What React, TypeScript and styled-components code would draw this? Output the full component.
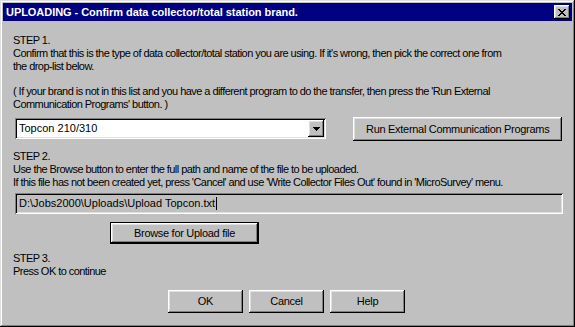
import React from "react";
import styled, { createGlobalStyle } from "styled-components";

const GlobalStyle = createGlobalStyle`
  html, body { margin: 0; padding: 0; background: #c0c0c0; }
  body {
    font-family: "Liberation Sans", Arial, sans-serif;
    font-size: 11px;
    color: #000;
  }
`;

const raised = `
  box-shadow: inset -1px -1px #000, inset 1px 1px #fff, inset -2px -2px #808080, inset 2px 2px #dfdfdf;
`;
const sunken = `
  box-shadow: inset 1px 1px #808080, inset -1px -1px #fff, inset 2px 2px #000, inset -2px -2px #dfdfdf;
`;

const Window = styled.div`
  width: 575px;
  height: 327px;
  box-sizing: border-box;
  padding: 3px;
  background: #c0c0c0;
  box-shadow: inset -1px -1px #000, inset 1px 1px #dfdfdf, inset -2px -2px #808080, inset 2px 2px #fff;
  display: flex;
  flex-direction: column;
`;

const TitleBar = styled.div`
  height: 18px;
  background: #000080;
  color: #fff;
  display: flex;
  align-items: center;
  justify-content: space-between;
  padding: 0 2px 0 3px;
  font-weight: bold;
  font-size: 11px;
  letter-spacing: -0.05px;
`;

const CloseButton = styled.div`
  width: 16px;
  height: 14px;
  background: #c0c0c0;
  ${raised}
  display: flex;
  align-items: center;
  justify-content: center;
`;

const Body = styled.div`
  padding: 13px 10px 0 10px;
  display: flex;
  flex-direction: column;
  letter-spacing: -0.3px;
`;

const Para = styled.div<{ $gap?: number }>`
  line-height: 13px;
  white-space: nowrap;
  letter-spacing: -0.55px;
  margin-top: ${(p) => p.$gap ?? 0}px;
`;

const ComboRow = styled.div`
  display: flex;
  align-items: flex-start;
  margin-top: 6px;
  padding-left: 2px;
`;

const Combo = styled.div`
  width: 312px;
  height: 21px;
  margin-top: 1px;
  box-sizing: border-box;
  background: #fff;
  ${sunken}
  display: flex;
  align-items: center;
  justify-content: space-between;
  padding: 2px 2px 2px 4px;
  line-height: 13px;
  letter-spacing: 0;
`;

const DropButton = styled.div`
  width: 16px;
  height: 17px;
  background: #c0c0c0;
  ${raised}
  display: flex;
  align-items: center;
  justify-content: center;
`;

const Button = styled.div<{ $w: number; $h?: number; $default?: boolean }>`
  width: ${(p) => p.$w}px;
  height: ${(p) => p.$h ?? 23}px;
  box-sizing: border-box;
  background: #c0c0c0;
  display: flex;
  align-items: center;
  justify-content: center;
  line-height: 13px;
  white-space: nowrap;
  ${(p) =>
    p.$default
      ? `border: 1px solid #000; ${raised}`
      : raised}
`;

const RunButton = styled(Button)`
  margin-left: 27px;
`;

const FileField = styled.div`
  margin: 4px 0 0 2px;
  height: 21px;
  width: 548px;
  box-sizing: border-box;
  background: #c0c0c0;
  ${sunken}
  display: flex;
  align-items: center;
  padding: 0 4px;
  line-height: 13px;
  letter-spacing: 0;
`;

const Caret = styled.span`
  display: inline-block;
  width: 1px;
  height: 13px;
  background: #000;
  margin-left: 1px;
`;

const BrowseButton = styled(Button)`
  margin: 8px 0 0 97px;
`;

const ButtonBar = styled.div`
  display: flex;
  justify-content: center;
  gap: 6px;
  margin-top: 12px;
  padding-right: 2px;
`;

const CloseGlyph = () => (
  <svg width="8" height="7" viewBox="0 0 8 7" shapeRendering="crispEdges">
    <path
      fill="#000"
      d="M0 0h2v1H0zM6 0h2v1H6zM1 1h2v1H1zM5 1h2v1H5zM2 2h4v1H2zM3 3h2v1H3zM2 4h4v1H2zM1 5h2v1H1zM5 5h2v1H5zM0 6h2v1H0zM6 6h2v1H6z"
    />
  </svg>
);

const ArrowGlyph = () => (
  <svg width="7" height="4" viewBox="0 0 7 4" shapeRendering="crispEdges">
    <path fill="#000" d="M0 0h7v1H0zM1 1h5v1H1zM2 2h3v1H2zM3 3h1v1H3z" />
  </svg>
);

export default function App() {
  return (
    <>
      <GlobalStyle />
      <Window>
        <TitleBar>
          <span>UPLOADING - Confirm data collector/total station brand.</span>
          <CloseButton>
            <CloseGlyph />
          </CloseButton>
        </TitleBar>
        <Body>
          <Para>STEP 1.</Para>
          <Para>
            Confirm that this is the type of data collector/total station you are using. If it's wrong, then pick the correct one from
            <br />
            the drop-list below.
          </Para>
          <Para $gap={12}>
            ( If your brand is not in this list and you have a different program to do the transfer, then press the 'Run External
            <br />
            Communication Programs' button. )
          </Para>
          <ComboRow>
            <Combo>
              <span>Topcon 210/310</span>
              <DropButton>
                <ArrowGlyph />
              </DropButton>
            </Combo>
            <RunButton $w={209} $h={24}>
              Run External Communication Programs
            </RunButton>
          </ComboRow>
          <Para $gap={9}>STEP 2.</Para>
          <Para>
            Use the Browse button to enter the full path and name of the file to be uploaded.
            <br />
            If this file has not been created yet, press 'Cancel' and use 'Write Collector Files Out' found in 'MicroSurvey' menu.
          </Para>
          <FileField>
            <span>D:\Jobs2000\Uploads\Upload Topcon.txt</span>
            <Caret />
          </FileField>
          <BrowseButton $w={149} $h={22} $default>
            Browse for Upload file
          </BrowseButton>
          <Para $gap={8}>STEP 3.</Para>
          <Para>Press OK to continue</Para>
          <ButtonBar>
            <Button $w={75}>OK</Button>
            <Button $w={75}>Cancel</Button>
            <Button $w={75}>Help</Button>
          </ButtonBar>
        </Body>
      </Window>
    </>
  );
}
